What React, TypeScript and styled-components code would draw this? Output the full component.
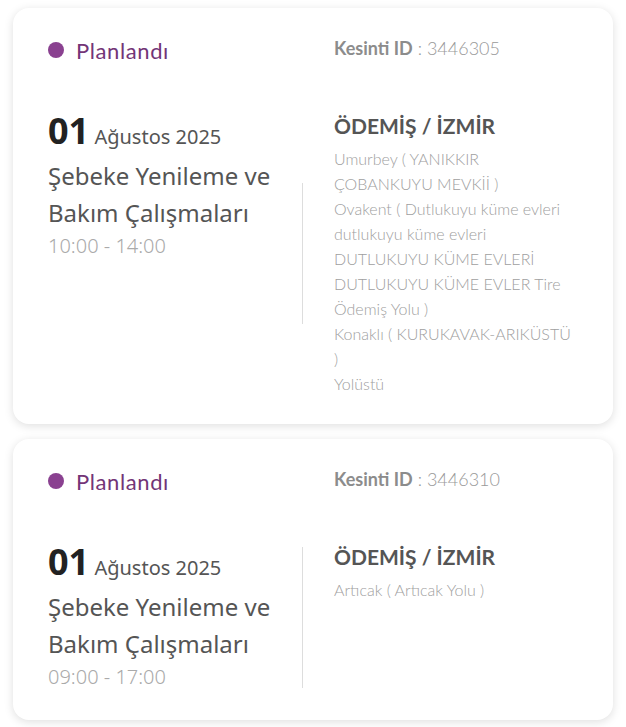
import styled, { createGlobalStyle } from "styled-components";

const outages = [
  {
    id: "3446305",
    status: "Planlandı",
    day: "01",
    month: "Ağustos 2025",
    title: "Şebeke Yenileme ve Bakım Çalışmaları",
    time: "10:00 - 14:00",
    city: "ÖDEMİŞ / İZMİR",
    places: [
      "Umurbey ( YANIKKIR ÇOBANKUYU MEVKİİ )",
      "Ovakent ( Dutlukuyu küme evleri dutlukuyu küme evleri DUTLUKUYU KÜME EVLERİ DUTLUKUYU KÜME EVLER Tire Ödemiş Yolu )",
      "Konaklı ( KURUKAVAK-ARIKÜSTÜ )",
      "Yolüstü",
    ],
  },
  {
    id: "3446310",
    status: "Planlandı",
    day: "01",
    month: "Ağustos 2025",
    title: "Şebeke Yenileme ve Bakım Çalışmaları",
    time: "09:00 - 17:00",
    city: "ÖDEMİŞ / İZMİR",
    places: ["Artıcak ( Artıcak Yolu )"],
  },
];

export default function App() {
  return (
    <>
      <GlobalStyle />
      <List>
        {outages.map((o) => (
          <Card key={o.id}>
            <Status>
              <Dot />
              {o.status}
            </Status>
            <Spacer />
            <OutageId>
              <b>Kesinti ID</b> : {o.id}
            </OutageId>

            <When>
              <DateLine>
                <Day>{o.day}</Day> {o.month}
              </DateLine>
              <Title>{o.title}</Title>
              <Time>{o.time}</Time>
            </When>
            <Divider />
            <Where>
              <City>{o.city}</City>
              {o.places.map((p) => (
                <Place key={p}>{p}</Place>
              ))}
            </Where>
          </Card>
        ))}
      </List>
    </>
  );
}

const GlobalStyle = createGlobalStyle`
  body {
    margin: 0;
    background: #ffffff;
    font-family: "Noto Sans", sans-serif;
  }
`;

const List = styled.div`
  display: flex;
  flex-direction: column;
  gap: 15px;
  padding: 8px 13px;
`;

const Card = styled.div`
  display: grid;
  grid-template-columns: 254px 1px 1fr;
  grid-template-rows: 28px auto;
  row-gap: 47px;
  padding: 28px 35px 28px 35px;
  background: #fff;
  border-radius: 16px;
  box-shadow: 0 2px 10px rgba(0, 0, 0, 0.13);
`;

const Status = styled.div`
  display: flex;
  align-items: center;
  gap: 12px;
  font-family: Lato, sans-serif;
  font-size: 22px;
  letter-spacing: 0.6px;
  color: #733577;
`;

const Dot = styled.span`
  width: 16px;
  height: 16px;
  border-radius: 50%;
  background: #8a4190;
`;

const Spacer = styled.div``;

const OutageId = styled.div`
  align-self: center;
  margin-top: -4px;
  padding-left: 31px;
  font-family: Lato, sans-serif;
  font-size: 18px;
  font-weight: 300;
  color: #999;
  b {
    font-weight: 700;
    color: #8c8c8c;
  }
`;

const When = styled.div`
  display: flex;
  flex-direction: column;
  align-self: start;
`;

const DateLine = styled.div`
  line-height: 40px;
  font-size: 20px;
  color: #555;
`;

const Day = styled.span`
  font-size: 36px;
  font-weight: 700;
  color: #222;
`;

const Title = styled.div`
  font-size: 24px;
  line-height: 37px;
  color: #555;
`;

const Time = styled.div`
  font-size: 20px;
  line-height: 30px;
  font-weight: 300;
  color: #aaa;
`;

const Divider = styled.div`
  align-self: center;
  height: 141px;
  background: #ddd;
`;

const Where = styled.div`
  display: flex;
  flex-direction: column;
  padding-left: 31px;
`;

const City = styled.div`
  margin-bottom: 5px;
  font-family: Lato, sans-serif;
  font-size: 21px;
  line-height: 30px;
  font-weight: 700;
  color: #555;
`;

const Place = styled.div`
  font-family: Lato, sans-serif;
  font-size: 16px;
  line-height: 25px;
  font-weight: 300;
  color: #a0a0a0;
`;
